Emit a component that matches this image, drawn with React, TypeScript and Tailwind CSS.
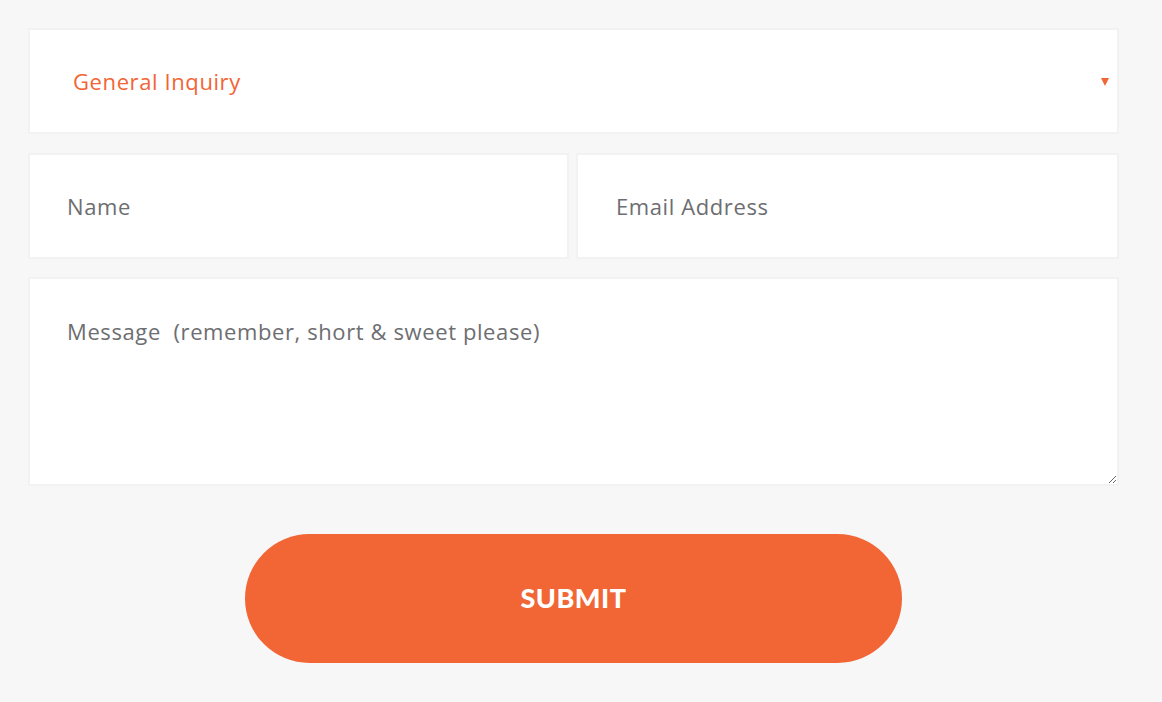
export default function App() {
  return (
    <div className="min-h-[702px] w-full bg-[#f7f7f7] px-[28px] pt-[28px] font-['Open_Sans',sans-serif]">
      <form className="flex w-[1091px] flex-col" onSubmit={(e) => e.preventDefault()}>
        <div className="relative h-[106px] border-2 border-[#f2f2f2] bg-white">
          <select
            defaultValue="general"
            className="h-full w-full appearance-none bg-transparent pl-[43px] text-[22px] tracking-[0.6px] text-[#f26535] outline-none"
          >
            <option value="general">General Inquiry</option>
            <option value="press">Press</option>
            <option value="other">Other</option>
          </select>
          <span className="pointer-events-none absolute right-[8px] top-[48px] h-0 w-0 border-x-[4.5px] border-t-[8px] border-x-transparent border-t-[#f26535]" />
        </div>

        <div className="mt-[19px] flex gap-[7px]">
          <input
            placeholder="Name"
            className="h-[106px] flex-1 border-2 border-[#f2f2f2] bg-white px-[37px] text-[22px] tracking-[0.6px] text-[#6d6e71] outline-none placeholder:text-[#6d6e71]"
          />
          <input
            placeholder="Email Address"
            className="h-[106px] flex-1 border-2 border-[#f2f2f2] bg-white px-[38px] text-[22px] tracking-[0.6px] text-[#6d6e71] outline-none placeholder:text-[#6d6e71]"
          />
        </div>

        <textarea
          placeholder="Message  (remember, short & sweet please)"
          className="mt-[18px] block h-[209px] border-2 border-[#f2f2f2] bg-white px-[37px] pt-[37px] text-[22px] leading-[30px] tracking-[0.6px] text-[#6d6e71] outline-none placeholder:text-[#6d6e71]"
        />

        <button
          type="submit"
          className="mx-auto mt-[48px] h-[129px] w-[657px] rounded-full bg-[#f26535] font-['Lato',sans-serif] text-[27px] font-black tracking-[0.5px] text-white"
        >
          SUBMIT
        </button>
      </form>
    </div>
  );
}
